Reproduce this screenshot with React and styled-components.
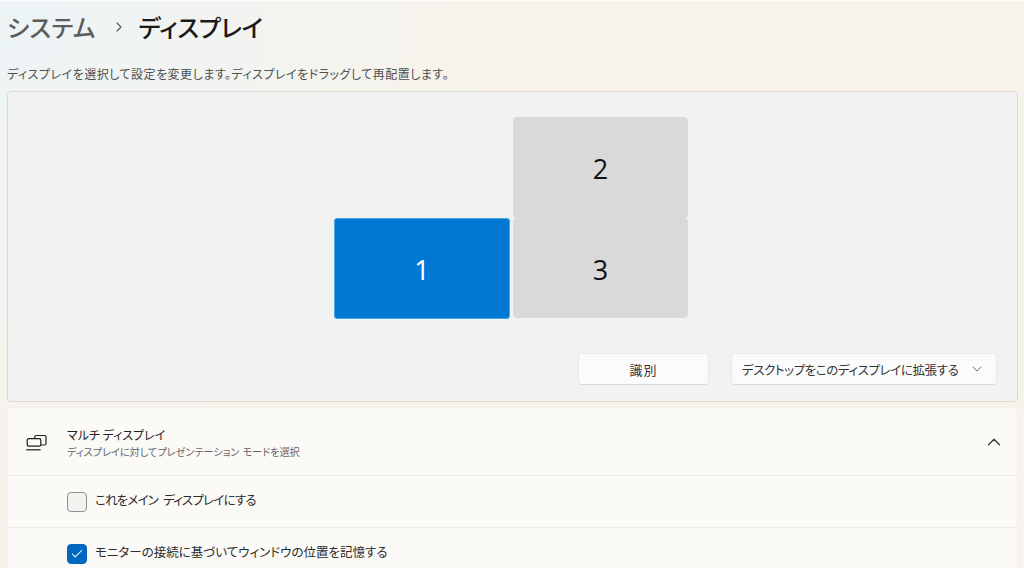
import styled, { createGlobalStyle } from 'styled-components';
import { ChevronRight, ChevronDown, ChevronUp, Check } from 'lucide-react';

const GlobalStyle = createGlobalStyle`
  html, body {
    margin: 0;
    padding: 0;
    height: 568px;
    overflow: hidden;
  }
  body {
    font-family: "Noto Sans CJK JP", "Noto Sans", sans-serif;
    font-feature-settings: "palt";
    color: #1b1b1b;
  }
`;

const Page = styled.div`
  box-sizing: border-box;
  width: 1024px;
  height: 568px;
  overflow: hidden;
  padding: 1px 6px 0 7px;
  border-top: 1px solid #fbfbf9;
  background:
    radial-gradient(circle at 0 0, #ecf4f6 0%, rgba(240, 244, 244, 0.6) 22%, rgba(247, 243, 235, 0) 42%),
    #f7f3eb;
`;

const TitleRow = styled.div`
  display: flex;
  align-items: center;
  height: 48px;
  font-size: 24px;
  font-weight: 500;
`;

const Parent = styled.span`
  color: #5c5c5c;
  letter-spacing: 0.3px;
`;

const Current = styled.span`
  color: #1a1a1a;
  letter-spacing: -0.2px;
`;

const Separator = styled.span`
  display: flex;
  margin: 2px 12px 0 15px;
  color: #555;
`;

const Description = styled.div`
  font-size: 12px;
  line-height: 18px;
  height: 18px;
  margin: 15px 0 8px;
  color: #4f4f4f;
  letter-spacing: 0.5px;
`;

const DisplayPanel = styled.div`
  box-sizing: border-box;
  position: relative;
  height: 311px;
  background: #f2f2f2;
  border: 1px solid #dcd8d2;
  border-radius: 4px;
  display: flex;
  justify-content: flex-end;
  align-items: flex-end;
  padding: 0 20px 16px 0;
  gap: 22px;
`;

const Monitor = styled.div`
  box-sizing: border-box;
  position: absolute;
  left: ${(p) => p.$x}px;
  top: ${(p) => p.$y}px;
  width: ${(p) => p.$w}px;
  height: ${(p) => p.$h}px;
  padding-top: 2px;
  display: flex;
  align-items: center;
  justify-content: center;
  border-radius: 4px;
  font-family: "Open Sans", sans-serif;
  font-size: 27px;
  background: ${(p) => (p.$active ? '#0078d4' : '#d9d9d9')};
  color: ${(p) => (p.$active ? '#fff' : '#111')};
  box-shadow: ${(p) => (p.$active ? 'inset 0 0 0 1px #4aa6e6' : 'none')};
`;

const Button = styled.button`
  box-sizing: border-box;
  height: 32px;
  width: ${(p) => p.$w}px;
  display: flex;
  align-items: center;
  justify-content: ${(p) => (p.$between ? 'space-between' : 'center')};
  padding: ${(p) => (p.$between ? '0 11px 0 10px' : '0')};
  background: #fbfbfb;
  border: 1px solid #e8e8e8;
  border-bottom-color: #d6d6d6;
  border-radius: 4px;
  font-family: inherit;
  font-feature-settings: "palt";
  font-size: ${(p) => (p.$between ? '12.5px' : '13px')};
  letter-spacing: ${(p) => (p.$between ? '-0.4px' : '1px')};
  white-space: nowrap;
  color: #333;
`;

const Card = styled.div`
  margin-top: 5px;
  background: #fbfaf7;
  border: 1px solid #f2efe9;
  border-bottom: none;
  border-radius: 4px 4px 0 0;
`;

const HeaderRow = styled.div`
  display: flex;
  align-items: center;
  height: 67px;
  padding: 0 12px 0 17px;
  border-bottom: 1px solid #ece9e4;
`;

const IconSlot = styled.div`
  display: flex;
  width: 24px;
  margin-right: 18px;
`;

const HeaderText = styled.div`
  flex: 1;
  padding-top: 2px;
`;

const HeaderTitle = styled.div`
  font-size: 12px;
  line-height: 16px;
  color: #1f1f1f;
`;

const HeaderSub = styled.div`
  margin-top: 2px;
  font-size: 10.2px;
  line-height: 14px;
  color: #666;
  letter-spacing: -0.05px;
  word-spacing: 1px;
`;

const OptionRow = styled.div`
  display: flex;
  align-items: center;
  gap: 8px;
  height: 51px;
  padding-left: 59px;
  border-bottom: 1px solid #ece9e4;
  font-size: 12.5px;
  letter-spacing: ${(p) => (p.$tight ? '-0.8px' : '0')};
  word-spacing: ${(p) => (p.$tight ? '3px' : '0')};
  color: #2b2b2b;
`;

const OptionLabel = styled.span`
  margin-bottom: 4px;
`;

const Box = styled.span`
  box-sizing: border-box;
  width: 20px;
  height: 20px;
  display: flex;
  align-items: center;
  justify-content: center;
  border-radius: 4px;
  background: ${(p) => (p.$checked ? '#0067c0' : '#f3f2f0')};
  border: 1px solid ${(p) => (p.$checked ? '#0067c0' : '#8f8f8f')};
  color: #fff;
`;

const DisplaysIcon = () => (
  <svg width="22" height="18" viewBox="0 0 22 18" fill="none" stroke="#1c1c1c" strokeWidth="1.2">
    <path d="M9.8 5.2V4a1.5 1.5 0 0 1 1.5-1.5h8.2A1.5 1.5 0 0 1 21 4v6.5a1.5 1.5 0 0 1-1.5 1.5H16" />
    <rect x="2.2" y="5.6" width="13.6" height="7.6" rx="1.6" />
    <path d="M1.2 16.8h14.4" />
  </svg>
);

export default function App() {
  return (
    <>
      <GlobalStyle />
      <Page>
        <TitleRow>
          <Parent>システム</Parent>
          <Separator>
            <ChevronRight size={16} strokeWidth={1.6} />
          </Separator>
          <Current>ディスプレイ</Current>
        </TitleRow>
        <Description>ディスプレイを選択して設定を変更します。ディスプレイをドラッグして再配置します。</Description>
        <DisplayPanel>
          <Monitor $x={505} $y={25} $w={175} $h={101}>2</Monitor>
          <Monitor $x={505} $y={126} $w={175} $h={100}>3</Monitor>
          <Monitor $x={326} $y={126} $w={176} $h={101} $active>1</Monitor>
          <Button $w={131}>識別</Button>
          <Button $w={266} $between>
            デスクトップをこのディスプレイに拡張する
            <ChevronDown size={16} strokeWidth={1.3} color="#555" />
          </Button>
        </DisplayPanel>
        <Card>
          <HeaderRow>
            <IconSlot>
              <DisplaysIcon />
            </IconSlot>
            <HeaderText>
              <HeaderTitle>マルチ ディスプレイ</HeaderTitle>
              <HeaderSub>ディスプレイに対してプレゼンテーション モードを選択</HeaderSub>
            </HeaderText>
            <ChevronUp size={22} strokeWidth={1.3} color="#333" />
          </HeaderRow>
          <OptionRow $tight>
            <Box />
            <OptionLabel>これをメイン ディスプレイにする</OptionLabel>
          </OptionRow>
          <OptionRow>
            <Box $checked>
              <Check size={14} strokeWidth={1.8} />
            </Box>
            <OptionLabel>モニターの接続に基づいてウィンドウの位置を記憶する</OptionLabel>
          </OptionRow>
        </Card>
      </Page>
    </>
  );
}
